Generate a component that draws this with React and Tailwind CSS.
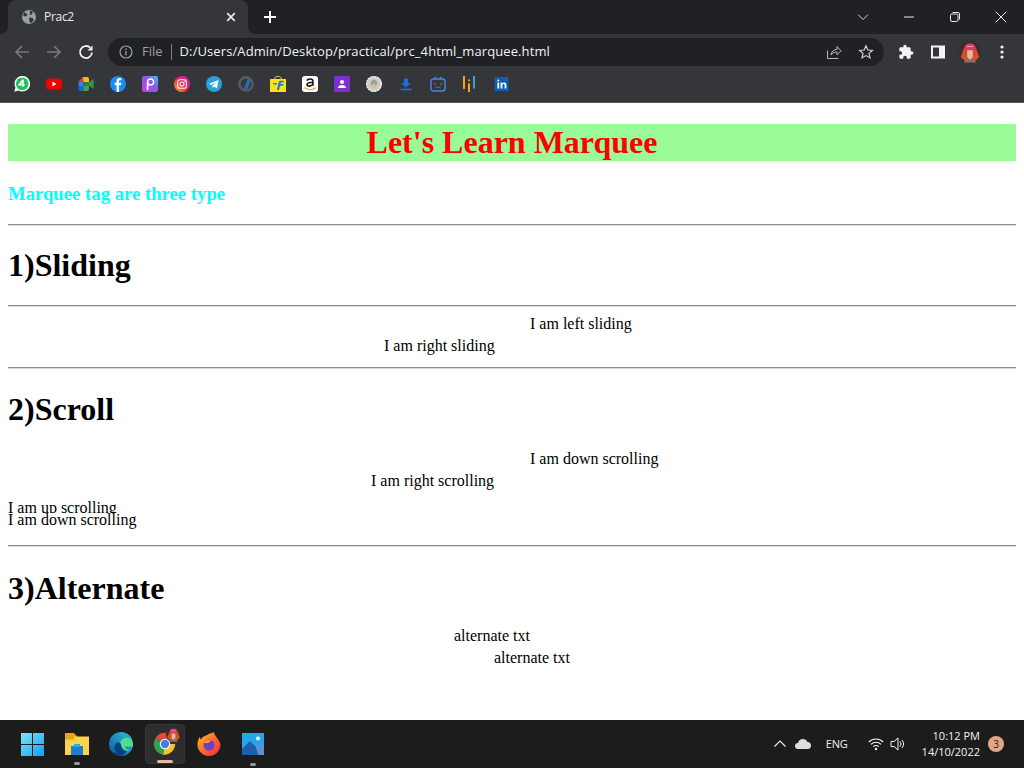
import React from "react";

const ui = { fontFamily: '"Open Sans","Noto Sans",sans-serif' };
const serif = { fontFamily: '"Liberation Serif",serif' };

const Svg = ({ children, s = 16, v = "0 0 16 16", className = "" }) => (
  <svg width={s} height={s} viewBox={v} fill="none" className={`shrink-0 ${className}`}>{children}</svg>
);

const bookmarks = [
  <Svg key="wa"><path d="M.3 15.700l1.200-4.200A7.800 7.800 0 1 1 4.600 14.600z" fill="#fff"/><circle cx="8.200" cy="7.800" r="6.300" fill="#1fc25a"/><path d="M9 3.800v7M9 3.800L5.300 8.800h5.400" stroke="#fff" strokeWidth="1.600"/></Svg>,
  <Svg key="yt"><rect x="0" y="2.500" width="16" height="11" rx="3" fill="#f40000"/><path d="M6.400 5.600v4.800L10.400 8z" fill="#fff"/></Svg>,
  <Svg key="meet"><path d="M5 1L.5 5.500h5V1z" fill="#ea4335"/><path d="M5 1h4a2 2 0 0 1 2 2v3H5.500z" fill="#fbbc04"/><path d="M.5 5.500h5V10h-5z" fill="#2684fc"/><path d="M.5 10h5v5H2.500a2 2 0 0 1-2-2z" fill="#1967d2"/><path d="M5.500 10H11v3a2 2 0 0 1-2 2H5.500z" fill="#34a853"/><path d="M11 6.500l4.500-3.500v10l-4.500-3.500z" fill="#2e9a4c"/><path d="M5.500 6H11v4H5.500z" fill="#2e7d46"/></Svg>,
  <Svg key="fb"><circle cx="8" cy="8" r="8" fill="#1b8cf2"/><path d="M9 16V9.200h2l.4-2.400H9V5.500c0-.8.300-1.200 1.200-1.200h1.200V2.200C11 2.100 10.400 2 9.800 2 7.800 2 6.600 3.200 6.600 5.200v1.600H4.700v2.400h1.900V16z" fill="#fff"/></Svg>,
  <Svg key="pa"><defs><linearGradient id="pa" x1="0" y1="1" x2="1" y2="0"><stop offset="0" stopColor="#c13fd8"/><stop offset=".6" stopColor="#8b58ee"/><stop offset="1" stopColor="#3cc8ee"/></linearGradient></defs><rect width="16" height="16" rx="2" fill="url(#pa)"/><circle cx="8.600" cy="6" r="3" stroke="#fff" strokeWidth="1.400"/><path d="M5.600 6v8" stroke="#fff" strokeWidth="1.700"/></Svg>,
  <Svg key="ig"><defs><linearGradient id="ig" x1="0" y1="1" x2="1" y2="0"><stop offset="0" stopColor="#fdc30f"/><stop offset=".5" stopColor="#f2204f"/><stop offset="1" stopColor="#b52bd6"/></linearGradient></defs><circle cx="8" cy="8" r="8" fill="url(#ig)"/><rect x="3.700" y="3.700" width="8.600" height="8.600" rx="2.400" stroke="#fff" strokeWidth="1.100"/><circle cx="8" cy="8" r="2" stroke="#fff" strokeWidth="1.100"/><circle cx="10.500" cy="5.500" r=".6" fill="#fff"/></Svg>,
  <Svg key="tg"><circle cx="8" cy="8" r="8" fill="#2aa1da"/><path d="M3 7.800l9.500-3.800-1.500 8.500-2.800-2-1.500 1.500-.3-2.500 4-3.600-5.200 3z" fill="#fff"/></Svg>,
  <Svg key="o"><circle cx="8" cy="8" r="6.600" stroke="#565a60" strokeWidth="2.600"/><path d="M5.500 13.500L10 2.200l3 2L9.500 13z" fill="#2a6bb5"/></Svg>,
  <Svg key="fk"><path d="M4.500 3.500C4.500 1.200 6 .4 8 .4s3.500.8 3.500 3.100" stroke="#f7d51d" strokeWidth="1"/><path d="M0 3h16v13H0z" fill="#fbe118"/><path d="M7 14l1.500-7.500c.3-1.300 1.200-1.800 2.400-1.800h3l-.4 1.800h-2.600l-.3 1.400h2.800l-.4 1.800H10L9.100 14z" fill="#1e74ea"/><path d="M3 7h4l-.3 1.500H3.500z" fill="#1e74ea"/></Svg>,
  <Svg key="az"><rect width="16" height="16" rx="3" fill="#fff"/><path d="M5 4.700C5.300 3.500 6.500 3 8 3c1.800 0 2.900.7 2.900 2.200v4.600M10.900 6.300C8 6.300 5 6.600 5 8.600 5 10.800 9.600 10.700 10.900 8" stroke="#111" strokeWidth="1.600"/><path d="M2.500 11.500c3.500 2.700 8 2.700 11 .3" stroke="#f90" strokeWidth="1.200"/></Svg>,
  <Svg key="ct"><rect width="16" height="16" rx="1.500" fill="#7e2fd0"/><circle cx="8" cy="6" r="2" fill="#fff"/><path d="M4 12c0-2 1.800-3 4-3s4 1 4 3z" fill="#fff"/></Svg>,
  <Svg key="sp"><circle cx="8" cy="8" r="8" fill="#c9c9c9"/><circle cx="8" cy="8" r="7" stroke="#ececec" strokeDasharray="1.500 1.500" strokeWidth="2"/><circle cx="8" cy="7" r="3" fill="#9a9a9a"/><path d="M8 6l1.800 3.800L8 13l-1.800-3.200z" fill="#f0b860"/></Svg>,
  <Svg key="dl"><path d="M6 2.500h4v4.500h3L8 11.500 3 7h3z" fill="#1f6fe0"/><path d="M2.500 13.500h11" stroke="#1f6fe0" strokeWidth="1.600"/></Svg>,
  <Svg key="bl"><rect x="1" y="3" width="14" height="12" rx="2.500" stroke="#4a86e0" strokeWidth="1.400"/><path d="M4.500 1l2 2M11.500 1l-2 2" stroke="#4a86e0" strokeWidth="1.300"/><path d="M4 7.500l2 .8M12 7.500l-2 .8M5.500 11c1 1 1.700.3 2.500 0 .8.300 1.500 1 2.500 0" stroke="#4a86e0" strokeWidth="1"/></Svg>,
  <Svg key="hn"><path d="M2 0v13" stroke="#f4a60d" strokeWidth="2"/><path d="M7 7.500V16" stroke="#f4a60d" strokeWidth="2"/><path d="M7 3.500v1.500" stroke="#f4a60d" strokeWidth="2"/><path d="M12 0v12.500" stroke="#2fa3e0" strokeWidth="2"/></Svg>,
  <Svg key="li"><rect x=".5" y="1" width="14" height="14" fill="#0b5fb3"/><circle cx="4.300" cy="4.500" r="1" fill="#fff"/><path d="M3.400 6.500h1.800V12.500H3.400zM6.600 6.500h1.700v.9c.4-.7 1.100-1 1.900-1 1.600 0 2.200 1 2.200 2.700v3.400h-1.800V9.600c0-.9-.3-1.500-1.100-1.500s-1.100.600-1.100 1.500v2.900H6.600z" fill="#fff"/></Svg>,
];

const ChromeLogo = () => (
  <Svg s={24} v="0 0 26 26">
    <path d="M13 13L2.500 7A12 12 0 0 1 24 8H13z" fill="#dd4b3e"/>
    <path d="M13 13L2.500 7A12 12 0 0 0 11 24.800z" fill="#32a24f"/>
    <path d="M13 13h11a12 12 0 0 1-13 11.800z" fill="#f7c328"/>
    <circle cx="13" cy="13" r="5.700" fill="#fff"/>
    <circle cx="13" cy="13" r="4.500" fill="#3b82e6"/>
  </Svg>
);

const Avatar = ({ s = 20 }) => (
  <Svg s={s} v="0 0 20 20">
    <circle cx="10" cy="10" r="10" fill="#3f2a2c"/>
    <path d="M1.800 14C3 19.500 17 19.500 18.200 14l-2.200-6H4z" fill="#d2521f"/>
    <path d="M6 15h8l1.500 4.500h-11z" fill="#9c6a5a"/>
    <path d="M3.500 7.500C7 8.800 13 8.800 16.500 7.500 15 6.500 14.500 2 10 2S5 6.500 3.500 7.500z" fill="#d23c68"/>
    <path d="M7.500 8.500h5v6l-2.500 2.500-2.500-2.500z" fill="#e5b8a6"/>
    <path d="M7 5h6" stroke="#f19ab0" strokeWidth="1"/>
  </Svg>
);

function Header() {
  return (
    <header className="h-[103px] shrink-0 flex flex-col bg-[#35363a]" style={ui}>
      <div className="h-[34px] flex items-stretch text-white">
        <div className="w-2 bg-[#202124] rounded-br-lg" />
        <div className="w-[240px] bg-[#202124]">
          <div className="h-full bg-[#35363a] rounded-t-lg flex items-center pl-[13px] pr-[11px]">
            <Svg s={16} v="0 0 16 16">
              <circle cx="8" cy="8" r="7" fill="#9aa0a6"/>
              <path d="M3 3.500c1.500.3 3 1 3.500 2.200L5 7.500 2.200 7zM9 1.500l3 1.500-1.300 2.500-2 .5zM8.200 8.500l3.500.5 1 2.500-3 3-1.500-3z" fill="#35363a"/>
            </Svg>
            <span className="ml-[7px] text-xs tracking-[-0.3px] text-[#e8eaed] flex-1">Prac2</span>
            <Svg s={12} v="0 0 12 12"><path d="M2.200 2.200l7.600 7.600M9.800 2.200l-7.600 7.600" stroke="#e8eaed" strokeWidth="1.700"/></Svg>
          </div>
        </div>
        <div className="flex-1 bg-[#202124] rounded-bl-lg flex items-center">
          <Svg s={14} v="0 0 14 14" className="ml-[15px]"><path d="M7 1v12M1 7h12" stroke="#fff" strokeWidth="2"/></Svg>
          <div className="ml-auto flex items-center h-[34px]">
            <div className="w-[46px] flex justify-center"><Svg s={12} v="0 0 12 12"><path d="M1 3.500l5 5 5-5" stroke="#d8d9db" strokeWidth="1"/></Svg></div>
            <div className="w-[46px] flex justify-center"><Svg s={12} v="0 0 12 12"><path d="M1 6h10" stroke="#e8eaed" strokeWidth="1"/></Svg></div>
            <div className="w-[46px] flex justify-center"><Svg s={12} v="0 0 12 12"><rect x="1.500" y="3" width="7.500" height="7.500" rx="1.500" stroke="#e8eaed"/><path d="M3.500 1.500h5.500a1.500 1.500 0 0 1 1.500 1.500v5.500" stroke="#e8eaed"/></Svg></div>
            <div className="w-[46px] flex justify-center"><Svg s={12} v="0 0 12 12"><path d="M.7.700l10.600 10.600M11.300.700L.7 11.300" stroke="#e8eaed" strokeWidth="1"/></Svg></div>
          </div>
        </div>
      </div>
      <div className="h-[34px] flex items-center pl-[14px] pt-[2px]">
        <Svg s={16} v="0 0 16 16"><path d="M15 8H2M8 2L2 8l6 6" stroke="#77797c" strokeWidth="1.700"/></Svg>
        <Svg s={16} v="0 0 16 16" className="ml-4"><path d="M1 8h13M8 2l6 6-6 6" stroke="#77797c" strokeWidth="1.700"/></Svg>
        <Svg s={16} v="0 0 16 16" className="ml-4"><path d="M14 8.500A6 6 0 1 1 12.200 3.700" stroke="#f1f3f4" strokeWidth="1.800"/><path d="M14.500 1.500v5h-5z" fill="#f1f3f4"/></Svg>
        <div className="ml-[14px] w-[776px] h-7 rounded-full bg-[#202124] flex items-center pl-[11px] pr-[10px]">
          <Svg s={14} v="0 0 14 14"><circle cx="7" cy="7" r="6" stroke="#9aa0a6" strokeWidth="1.200"/><path d="M7 6v4.200M7 3.500v1.400" stroke="#9aa0a6" strokeWidth="1.300"/></Svg>
          <span className="ml-[9px] text-[13px] text-[#9aa0a6]">File</span>
          <span className="ml-2 w-px h-4 bg-[#7a7c80]" />
          <span className="ml-2 text-[13px] text-[#f1f3f4] tracking-[0.1px]">D:/Users/Admin/Desktop/practical/prc_4html_marquee.html</span>
          <Svg s={16} v="0 0 16 16" className="ml-auto"><path d="M1.500 6.500v8h11M5 11c.5-3.500 3-5.500 6-5.500V2.500l4 4.300-4 4V8c-2.500 0-4.500 1-6 3z" stroke="#b8babc" strokeWidth="1"/></Svg>
          <Svg s={16} v="0 0 16 16" className="ml-4"><path d="M8 1.800l1.900 4.200 4.500.4-3.400 3 1 4.500L8 11.600l-4 2.300 1-4.500-3.400-3 4.500-.4z" stroke="#d0d1d3" strokeWidth="1.200"/></Svg>
        </div>
        <div className="ml-[14px] flex items-center">
          <Svg s={16} v="0 0 24 24"><path d="M20.500 11H19V7c0-1.100-.9-2-2-2h-4V3.500C13 2.120 11.880 1 10.500 1S8 2.120 8 3.500V5H4c-1.100 0-1.990.9-1.990 2v3.800H3.500c1.490 0 2.700 1.210 2.700 2.700s-1.210 2.700-2.700 2.700H2V20c0 1.100.9 2 2 2h3.800v-1.500c0-1.490 1.210-2.700 2.700-2.700 1.490 0 2.700 1.210 2.700 2.700V22H17c1.100 0 2-.9 2-2v-4h1.500c1.380 0 2.500-1.120 2.500-2.500S21.880 11 20.500 11z" fill="#f1f3f4"/></Svg>
          <Svg s={16} v="0 0 16 16" className="ml-4"><path d="M1 1.500h14v13H1z" fill="#f1f3f4"/><path d="M3 3.500h6v9H3z" fill="#35363a"/></Svg>
          <div className="ml-[13px]"><Avatar s={22} /></div>
          <Svg s={16} v="0 0 16 16" className="ml-[13px]"><circle cx="8" cy="3" r="1.600" fill="#f1f3f4"/><circle cx="8" cy="8" r="1.600" fill="#f1f3f4"/><circle cx="8" cy="13" r="1.600" fill="#f1f3f4"/></Svg>
        </div>
      </div>
      <div className="h-[34px] flex items-center pl-[14px] pb-[2px] gap-4">{bookmarks}</div>
      <div className="h-px bg-[#55565a]" />
    </header>
  );
}

const Rule = ({ className = "" }) => <hr className={`border-0 border-t border-b border-t-[#8c8c8c] border-b-[#dcdcdc] h-[2px] ${className}`} />;
const H = ({ children, className = "" }) => <h1 className={`text-[32px] leading-[37px] font-bold text-black ${className}`}>{children}</h1>;
const Line = ({ ml, children }) => <div className="h-[22px] leading-[22px] text-base text-black whitespace-nowrap" style={{ marginLeft: ml }}>{children}</div>;

function Page() {
  return (
    <main className="flex-1 min-h-0 overflow-hidden bg-white px-2 pt-[21px]" style={serif}>
      <div className="h-[37px] bg-[#98fb98] text-center text-[32px] leading-[37px] font-bold text-[#ff0000]">Let's Learn Marquee</div>
      <h3 className="mt-[22px] text-[18.72px] leading-[21px] font-bold text-[#00ffff]">Marquee tag are three type</h3>
      <Rule className="mt-5" />
      <H className="mt-[21px]">1)Sliding</H>
      <Rule className="mt-[21px]" />
      <div className="mt-[6px]"><Line ml={522}>I am left sliding</Line><Line ml={376}>I am right sliding</Line></div>
      <Rule className="mt-[10px]" />
      <H className="mt-[22px]">2)Scroll</H>
      <div className="mt-5"><Line ml={522}>I am down scrolling</Line><Line ml={363}>I am right scrolling</Line></div>
      <div className="mt-2 h-[13px] overflow-hidden leading-4 text-base text-black">I am up scrolling</div>
      <div className="h-4 overflow-hidden text-base leading-[14px] text-black">I am down scrolling</div>
      <Rule className="mt-4" />
      <H className="mt-[23px]">3)Alternate</H>
      <div className="mt-[18px]"><Line ml={446}>alternate txt</Line><Line ml={486}>alternate txt</Line></div>
    </main>
  );
}

function Taskbar() {
  return (
    <footer className="h-12 shrink-0 bg-[#1c1c1c] flex items-center text-white" style={ui}>
      <div className="flex items-center ml-[21px]">
        <Svg s={23} v="0 0 23 23"><defs><linearGradient id="w" x1="0" y1="0" x2="1" y2="1"><stop offset="0" stopColor="#7ee3f7"/><stop offset="1" stopColor="#12a0f5"/></linearGradient></defs><path d="M0 0h11v11H0zM12 0h11v11H12zM0 12h11v11H0zM12 12h11v11H12z" fill="url(#w)"/></Svg>
        <div className="ml-[21px] relative w-6 flex justify-center">
          <Svg s={24} v="0 0 24 24"><path d="M0 1h9l2 2.500h1V22H0z" fill="#e5a90f"/><path d="M9 4.500h15V23H0V7.500h9z" fill="#fcd34d"/><path d="M6 14h12v9H6z" fill="#1b7fd0"/><path d="M9 12h6v3H9z" fill="#38a6ea"/></Svg>
          <span className="absolute top-[30px] w-[6px] h-[3px] rounded-full bg-[#9a9a9a]" />
        </div>
        <div className="ml-5">
          <Svg s={24} v="0 0 24 24"><defs><linearGradient id="e" x1="0" y1="1" x2="1" y2="0"><stop offset="0" stopColor="#0c59a4"/><stop offset="1" stopColor="#2fc2d9"/></linearGradient></defs><circle cx="12" cy="12" r="12" fill="url(#e)"/><path d="M24 13c0-5-4-8-8-7-3 .5-5 3-5 6 0 4 3 7 7 7 1.500 0 2.500-.500 3-1-3 0-5-1.500-5-3.500h7c.500 0 1-.5 1-1.500z" fill="#50e08a"/><path d="M12 12c0 4 3 7 6 7-1.500 2-4 5-7 5-2 0-6-1-8-5 1 1 3 2 5 1.500-2-1-3-3-2.500-5.500C6.500 11 9 9 12 12z" fill="#0b3f84"/></Svg>
        </div>
        <div className="ml-3 relative w-[40px] h-[40px] rounded bg-[#2d2d2d] border border-[#363636] flex items-center justify-center">
          <ChromeLogo />
          <div className="absolute top-[2px] right-[3px]"><Avatar s={15} /></div>
          <span className="absolute bottom-0 w-4 h-[3px] rounded-full bg-[#e9b99f]" />
        </div>
        <div className="ml-3">
          <Svg s={24} v="0 0 24 24"><defs><linearGradient id="f" x1="0" y1="0" x2="1" y2="1"><stop offset="0" stopColor="#ffc31a"/><stop offset=".6" stopColor="#ff5c2b"/><stop offset="1" stopColor="#e6264f"/></linearGradient></defs><path d="M12 24A11.500 11.500 0 0 1 1 9c.5-2 1-3 2-4 0 1 .5 2 1 2.500C5.500 4.500 8 4 9 3.500 13 1 16 1 17 0c0 2 1 3 3 6 2 2.500 3.500 5 3.500 7A11.500 11.500 0 0 1 12 24z" fill="url(#f)"/><circle cx="12" cy="13" r="5.500" fill="#6c3fc7"/><path d="M6 11c2-3 6-4 9-2-2 0-3 1-3.500 2z" fill="#ff9b23"/></Svg>
        </div>
        <div className="ml-[21px] relative w-[22px] flex justify-center">
          <Svg s={22} v="0 0 22 22"><path d="M0 0h22v22H0z" fill="#22a7e8"/><circle cx="16" cy="5.500" r="2" fill="#fff"/><path d="M0 16l8-8 7 7 3-3 4 4v6H0z" fill="#1d5fa8"/><path d="M14 14l4-4 4 4v8h-6z" fill="#5e8fd8"/></Svg>
          <span className="absolute top-[30px] w-[6px] h-[3px] rounded-full bg-[#9a9a9a]" />
        </div>
      </div>
      <div className="ml-auto flex items-center">
        <Svg s={12} v="0 0 12 12"><path d="M.5 8.500L6 3l5.500 5.500" stroke="#f3f3f3" strokeWidth="1.100"/></Svg>
        <Svg s={16} v="0 0 16 16" className="ml-[9px]"><path d="M3 13a3 3 0 0 1 0-6c.5-2.500 2.500-4 5-4 2 0 3.500 1 4.500 3a3.500 3.500 0 0 1 0 7z" fill="#dedede"/></Svg>
        <span className="ml-[15px] text-[11px] tracking-[-0.2px] text-[#f3f3f3]">ENG</span>
        <Svg s={16} v="0 0 16 16" className="ml-5"><path d="M.8 6a10 10 0 0 1 14.400 0M3 8.400a7 7 0 0 1 10 0M5.300 10.700a3.700 3.700 0 0 1 5.400 0" stroke="#f3f3f3" strokeWidth="1.100"/><circle cx="8" cy="13" r="1.200" fill="#f3f3f3"/></Svg>
        <Svg s={16} v="0 0 16 16" className="ml-[6px]"><path d="M1 5.500h3L8 2v12l-4-3.500H1z" stroke="#f3f3f3"/><path d="M10 5.500a4 4 0 0 1 0 5M12 4a6.500 6.500 0 0 1 0 8" stroke="#f3f3f3"/></Svg>
        <div className="ml-4 flex flex-col items-end text-[11px] leading-[16px] text-[#f3f3f3]">
          <span>10:12 PM</span>
          <span>14/10/2022</span>
        </div>
        <span className="ml-2 mr-5 w-4 h-4 rounded-full bg-[#e4a584] text-[#1c1c1c] text-[10px] leading-4 text-center">3</span>
      </div>
    </footer>
  );
}

export default function App() {
  return (
    <div className="h-[768px] w-[1024px] flex flex-col overflow-hidden">
      <Header />
      <Page />
      <Taskbar />
    </div>
  );
}
